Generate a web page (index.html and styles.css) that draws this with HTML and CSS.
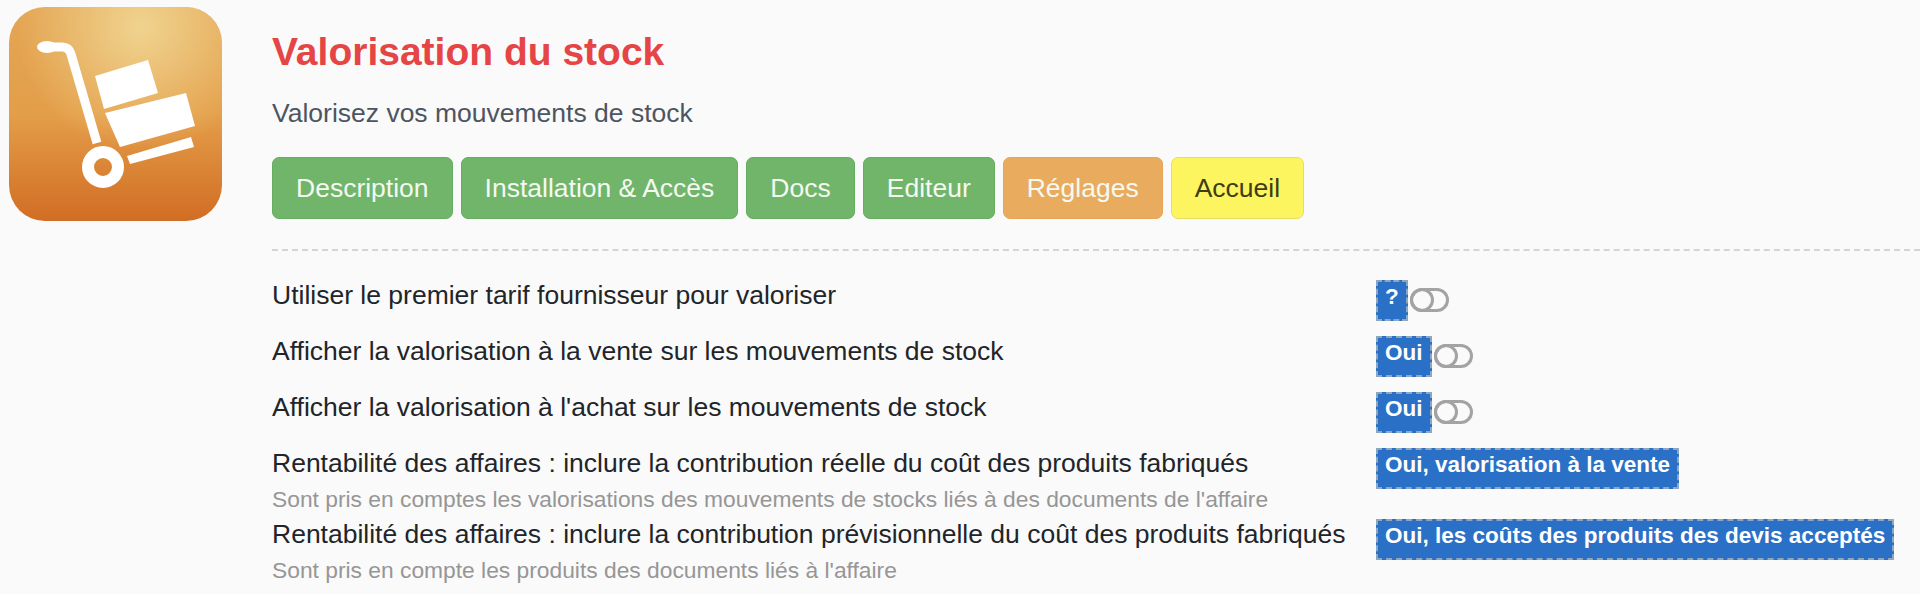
FILE: index.html
```html
<!DOCTYPE html>
<html lang="fr">
<head>
    <meta charset="UTF-8">
    <meta name="viewport" content="width=device-width, initial-scale=1.0">
    <title>Valorisation du stock</title>
    <link rel="stylesheet" href="styles.css">
</head>
<body>
    <div class="header">
        <svg class="app-icon" viewBox="0 0 213 214" width="213" height="214">
            <defs>
                <linearGradient id="iconBase" x1="0" y1="0" x2="0" y2="1">
                    <stop offset="0" stop-color="#e3a654"/>
                    <stop offset="0.5" stop-color="#e49e49"/>
                    <stop offset="1" stop-color="#d16d24"/>
                </linearGradient>
                <radialGradient id="iconGlow" gradientUnits="userSpaceOnUse" cx="132" cy="20" r="125">
                    <stop offset="0" stop-color="#f0d38f"/>
                    <stop offset="1" stop-color="#f0d38f" stop-opacity="0"/>
                </radialGradient>
            </defs>
            <rect width="213" height="214" rx="36" fill="url(#iconBase)"/>
            <rect width="213" height="214" rx="36" fill="url(#iconGlow)"/>
            <g transform="translate(-9 -7)" fill="#fff">
                <ellipse cx="47" cy="47" rx="10" ry="6"/>
                <path d="M47 47H62Q69 47 71 54L97 143" fill="none" stroke="#fff" stroke-width="9"/>
                <polygon points="95,76 148,60 158,93 104,109"/>
                <polygon points="105,113 186,93 195,126 120,147"/>
                <polygon points="127,156 191,137 194,147 130,164"/>
                <circle cx="103" cy="167" r="15" fill="none" stroke="#fff" stroke-width="12"/>
            </g>
        </svg>
        <div class="header-main">
            <h1>Valorisation du stock</h1>
            <p class="subtitle">Valorisez vos mouvements de stock</p>
            <div class="tabs">
                <a class="tab green">Description</a>
                <a class="tab green">Installation &amp; Accès</a>
                <a class="tab green">Docs</a>
                <a class="tab green">Editeur</a>
                <a class="tab orange">Réglages</a>
                <a class="tab yellow">Accueil</a>
            </div>
        </div>
    </div>

    <div class="settings">
        <div class="row">
            <div class="label">Utiliser le premier tarif fournisseur pour valoriser</div>
            <div class="value"><span class="badge">?</span><span class="toggle"></span></div>
        </div>
        <div class="row">
            <div class="label">Afficher la valorisation à la vente sur les mouvements de stock</div>
            <div class="value"><span class="badge">Oui</span><span class="toggle"></span></div>
        </div>
        <div class="row">
            <div class="label">Afficher la valorisation à l'achat sur les mouvements de stock</div>
            <div class="value"><span class="badge">Oui</span><span class="toggle"></span></div>
        </div>
        <div class="row row-hint">
            <div class="label">
                Rentabilité des affaires : inclure la contribution réelle du coût des produits fabriqués
                <small>Sont pris en comptes les valorisations des mouvements de stocks liés à des documents de l'affaire</small>
            </div>
            <div class="value"><span class="badge">Oui, valorisation à la vente</span></div>
        </div>
        <div class="row row-hint">
            <div class="label">
                Rentabilité des affaires : inclure la contribution prévisionnelle du coût des produits fabriqués
                <small>Sont pris en compte les produits des documents liés à l'affaire</small>
            </div>
            <div class="value"><span class="badge">Oui, les coûts des produits des devis acceptés</span></div>
        </div>
    </div>
</body>
</html>
```

FILE: styles.css
```css
body {
    font-family: "Liberation Sans", Arial, sans-serif;
    margin: 0;
    background-color: #fafafa;
    color: #212529;
    height: 594px;
    overflow: hidden;
}
.header {
    display: flex;
    padding: 7px 0 0 9px;
}
.app-icon {
    flex: none;
}
.header-main {
    margin-left: 50px;
}
h1 {
    margin: 0;
    padding-top: 20px;
    font-size: 39px;
    line-height: 50px;
    font-weight: bold;
    color: #e54545;
}
.subtitle {
    margin: 0;
    padding-top: 20px;
    font-size: 26.5px;
    line-height: 32px;
    color: #4d5560;
}
.tabs {
    display: flex;
    gap: 8px;
    margin-top: 28px;
}
.tab {
    display: flex;
    align-items: center;
    box-sizing: border-box;
    height: 62px;
    padding: 0 23px;
    font-size: 26.5px;
    border: 1px solid;
    border-radius: 7px;
    color: #f4f9f2;
}
.green {
    background-color: #70b56a;
    border-color: #66ad60;
}
.orange {
    background-color: #e9ac5e;
    border-color: #e6a655;
}
.yellow {
    background-color: #fdf560;
    border-color: #e5de62;
    color: #403c14;
}

.settings {
    margin: 28px 0 0 272px;
    border-top: 2px dashed #d4d4d4;
    padding-top: 29px;
}
.row {
    display: flex;
    height: 56px;
}
.row-hint {
    height: 71px;
}
.label {
    flex: none;
    box-sizing: border-box;
    width: 1104px;
    padding-top: 1px;
    font-size: 26.5px;
    line-height: 28px;
    color: #212529;
}
.label small {
    display: block;
    margin-top: 11px;
    font-size: 22.8px;
    line-height: 22px;
    color: #969696;
}
.value {
    display: flex;
    align-items: flex-start;
    gap: 2px;
}
.badge {
    box-sizing: border-box;
    height: 41px;
    padding: 2px 7px 0;
    border: 2px dashed #8fa6c0;
    background-color: #2a70c6;
    color: #fff;
    font-size: 22.5px;
    line-height: 26px;
    font-weight: bold;
    white-space: nowrap;
}
.toggle {
    box-sizing: border-box;
    width: 39px;
    height: 24px;
    margin-top: 8px;
    border: 3px solid #a3a3a3;
    border-radius: 12px;
}
.toggle::before {
    content: "";
    display: block;
    box-sizing: border-box;
    width: 24px;
    height: 24px;
    margin: -3px;
    border: 3px solid #a3a3a3;
    border-radius: 50%;
}
```
